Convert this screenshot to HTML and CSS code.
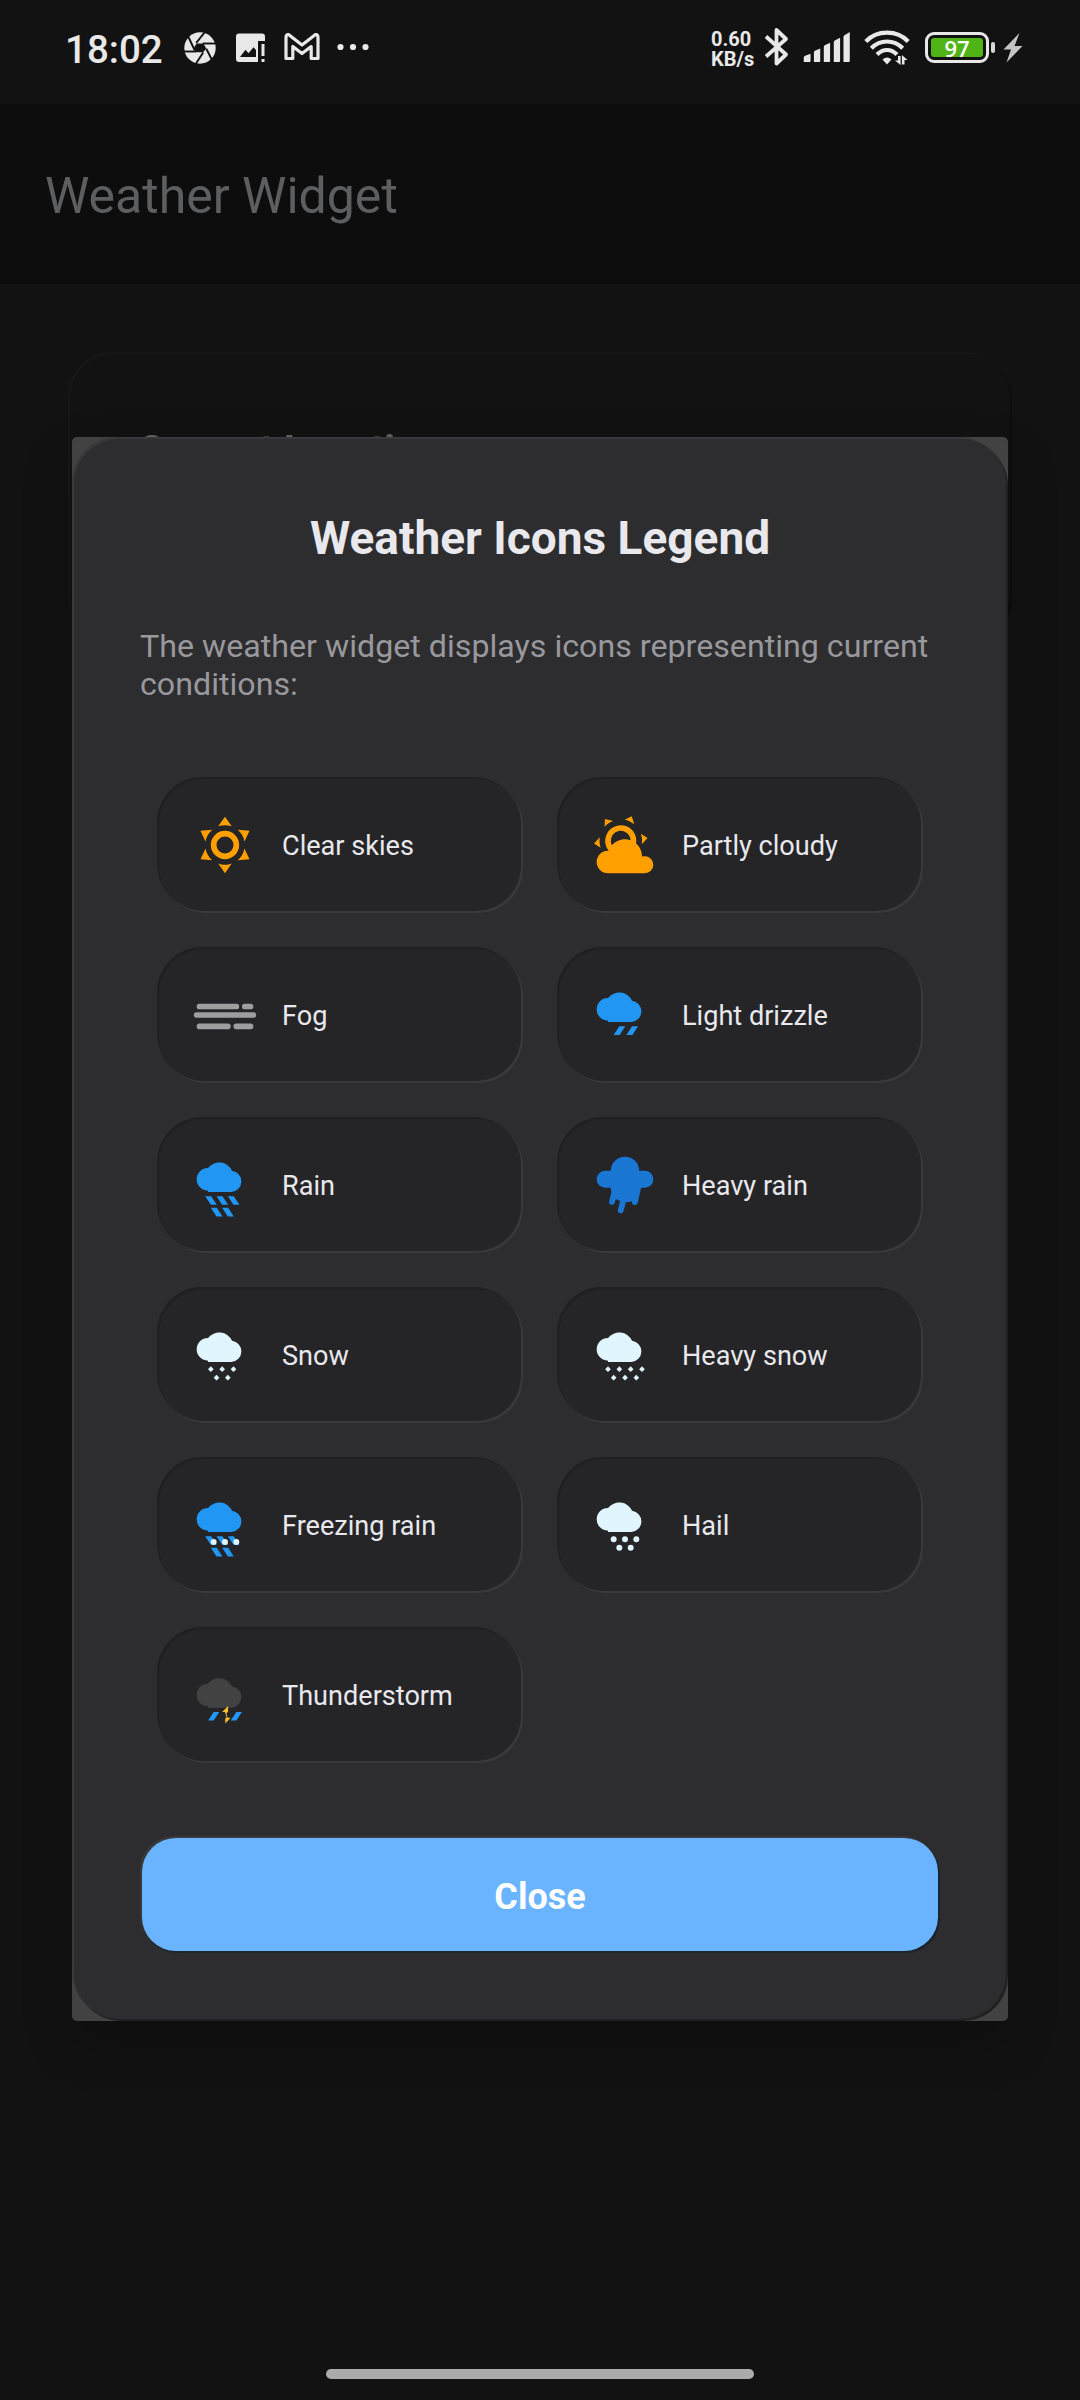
FILE: index.html
```html
<!DOCTYPE html>
<html lang="en">
<head>
<meta charset="utf-8">
<title>Weather Widget</title>
<link rel="stylesheet" href="styles.css">
</head>
<body>
<svg class="defs" aria-hidden="true">
  <defs>
    <path id="cloud" d="M6 14A4 4 0 0 1 6 6A5 5 0 0 1 14.5 7A3.77 3.77 0 0 1 14.25 14.5H6z"/>
    <path id="rain" d="M5 16h2.1l2 3H7zM9 16h2.1l2 3H11zM13 16h2.1l2 3H15zM7 20h2.1l2 3.1H9zM11 20h2.1l2 3.1H13z"/>
    <path id="flake" d="M0-1L1 0L0 1L-1 0z"/>
  </defs>
</svg>
<div class="screen">
  <header class="status">
    <div class="status-left">
      <span class="clock">18:02</span>
      <svg class="ic-shutter" viewBox="0 0 32 32"><circle cx="16" cy="16" r="15.7" fill="#e8e8e8"/><g stroke="#121212" stroke-width="1.9"><path d="M12.2 10.8L21 0"/><path d="M18.8 11.5L31.5 11.5" /><path d="M22.3 16.7L28 28"/><path d="M19.2 20.5L12 31.5"/><path d="M12 19.5L0 19.5"/><path d="M10.8 18.5L4 4"/></g><path d="M12.5 11.5h7l2.7 5-3 3.7h-7l-2.4-4z" fill="#121212"/></svg>
      <svg class="ic-photo" viewBox="0 0 30 30"><path fill="#e8e8e8" d="M3 .5H26a3 3 0 0 1 3 3V8h-7v21H3a3 3 0 0 1-3-3V3.500a3 3 0 0 1 3-3zM4 24H20V17L17.500 14.200l-5 6-3-3.500z" fill-rule="evenodd"/><path fill="#e8e8e8" d="M25.500 11h3v12h-3zM25.500 26h3v3h-3z"/></svg>
      <svg class="ic-mail" viewBox="0 0 36 28"><path d="M2 4.500Q2 1.500 4.500 1.500L18 12L31.500 1.500Q34 1.500 34 4.500V25.500H27.200V13.500L18 20.500L8.800 13.500V25.500H2z" fill="none" stroke="#e8e8e8" stroke-width="3.200" stroke-linejoin="round"/></svg>
      <svg class="ic-dots" viewBox="0 0 32 8" fill="#e8e8e8"><circle cx="3.500" cy="4" r="3.100"/><circle cx="16" cy="4" r="3.100"/><circle cx="28.500" cy="4" r="3.100"/></svg>
    </div>
    <div class="status-right">
      <div class="speed"><span>0.60</span><span>KB/s</span></div>
      <svg class="ic-bt" viewBox="0 0 26 40"><path d="M2 9.500L22 27.500L12.500 36.500V3L22 12L2 29.500" fill="none" stroke="#e8e8e8" stroke-width="3.800" stroke-linejoin="round"/></svg>
      <svg class="ic-signal" viewBox="0 0 48 32" fill="#e8e8e8"><path d="M0 31v-4.500Q0 25 1.500 24.500L7 22.500V30q0 1-1 1zM10.500 31V21q0-1.500 1.500-2l5-2V30q0 1-1 1zM20.700 31V15.500q0-1.500 1.500-2l5-2.500V30q0 1-1 1zM31 31V10.500q0-1.500 1.500-2L37.500 6V30q0 1-1 1zM41 31V5q0-1.500 1.500-2L47.500 0V30q0 1-1 1z"/></svg>
      <svg class="ic-wifi" viewBox="0 0 46 36"><g fill="none" stroke="#e8e8e8" stroke-width="4.200"><path d="M1.800 11.500Q10 2.600 23 2.600T44.200 11.500"/><path d="M7.300 18.200Q14 11.500 23 11.500T38.700 18.200"/><path d="M13 24.500Q17.500 20 23 20T33 24.500"/></g><path d="M18.500 29.500Q23 25.500 27.500 29.500L23 34.500z" fill="#e8e8e8"/><path d="M31 30.500h3V26h2.600v9zM43.500 30h-3v4.500h-2.600V25z" fill="#e8e8e8"/></svg>
      <div class="battery"><span class="charge">97</span></div>
      <i class="battery-tip"></i>
      <svg class="ic-bolt" viewBox="0 0 20 30"><path d="M16.500 0L.5 16.500H8L3.500 29.500L19.500 13H11.500z" fill="#c4c4c4"/></svg>
    </div>
  </header>

  <div class="appbar"><h1>Weather Widget</h1></div>
  <main class="page">
    <section class="panel"><h2>Current Location</h2></section>
  </main>

  <div class="dialog-window" role="dialog" aria-label="Weather Icons Legend">
    <div class="dialog">
      <h2 class="dialog-title">Weather Icons Legend</h2>
      <p class="dialog-text">The weather widget displays icons representing current conditions:</p>
      <div class="legend">
        <div class="item"><svg viewBox="0 0 24 24" fill="#ffa000"><path d="M12,7A5,5 0 0,1 17,12A5,5 0 0,1 12,17A5,5 0 0,1 7,12A5,5 0 0,1 12,7M12,9A3,3 0 0,0 9,12A3,3 0 0,0 12,15A3,3 0 0,0 15,12A3,3 0 0,0 12,9M12,2L14.390,5.420C13.650,5.150 12.840,5 12,5C11.160,5 10.350,5.150 9.610,5.420L12,2M3.340,7L7.500,6.650C6.900,7.160 6.360,7.780 5.940,8.500C5.500,9.240 5.250,10 5.110,10.790L3.340,7M3.360,17L5.120,13.230C5.260,14 5.530,14.780 5.950,15.500C6.370,16.240 6.910,16.860 7.500,17.370L3.360,17M20.650,7L18.880,10.790C18.740,10 18.470,9.230 18.050,8.500C17.630,7.780 17.100,7.150 16.500,6.640L20.650,7M20.640,17L16.500,17.360C17.090,16.850 17.620,16.220 18.040,15.500C18.460,14.770 18.730,14 18.870,13.210L20.640,17M12,22L9.590,18.560C10.330,18.830 11.140,19 12,19C12.820,19 13.630,18.830 14.370,18.560L12,22Z"/></svg><span>Clear skies</span></div>
        <div class="item"><svg viewBox="0 0 24 24" fill="#ffa000"><path d="M12.740,5.470C15.100,6.500 16.350,9.030 15.920,11.460C17.190,12.560 18,14.190 18,16V16.170C18.310,16.060 18.650,16 19,16A3,3 0 0,1 22,19A3,3 0 0,1 19,22H6A4,4 0 0,1 2,18A4,4 0 0,1 6,14H6.270C5,12.450 4.600,10.240 5.500,8.260C6.720,5.500 9.970,4.240 12.740,5.470M11.930,7.300C10.160,6.500 8.090,7.310 7.310,9.070C6.850,10.090 6.930,11.220 7.410,12.130C8.500,10.830 10.160,10 12,10C12.700,10 13.380,10.120 14,10.340C13.940,9.060 13.180,7.860 11.930,7.300M13.550,3.640C13,3.400 12.450,3.230 11.880,3.120L14.370,1.820L15.270,4.710C14.760,4.290 14.190,3.930 13.550,3.640M6.090,4.440C5.600,4.790 5.170,5.190 4.800,5.630L4.910,2.820L7.870,3.500C7.250,3.710 6.650,4.030 6.090,4.440M18,9.710C17.910,9.120 17.780,8.550 17.590,8L19.970,9.500L17.920,11.730C18.030,11.080 18.050,10.400 18,9.710M3.040,11.300C3.110,11.900 3.240,12.470 3.430,13L1.060,11.500L3.100,9.280C3,9.930 2.970,10.610 3.040,11.300Z"/></svg><span>Partly cloudy</span></div>
        <div class="item"><svg viewBox="0 0 24 24" fill="#9e9e9e"><rect x="2" y="8" width="15" height="2" rx=".9"/><rect x="18" y="8" width="4" height="2" rx=".9"/><rect x="1" y="11" width="22" height="2" rx=".9"/><rect x="2" y="15" width="12" height="2" rx=".9"/><rect x="15" y="15" width="7" height="2" rx=".9"/></svg><span>Fog</span></div>
        <div class="item"><svg viewBox="0 0 24 24" fill="#2196f3"><use href="#cloud"/><path d="M10 16h2.100l-2 3.100H8zM14.500 16h2.100l-2 3.100h-2.100z"/></svg><span>Light drizzle</span></div>
        <div class="item"><svg viewBox="0 0 24 24" fill="#2196f3"><use href="#cloud"/><use href="#rain"/></svg><span>Rain</span></div>
        <div class="item"><svg viewBox="0 0 24 24" fill="#1976d2"><path d="M5 7h2a5 5 0 0 1 10 0h2a3 3 0 0 1 0 6h-1.300l-1.200 5.200a1 1 0 0 1-2-.3l0-.2q-1 .4-2.200.4l-.8 3.100a1 1 0 0 1-2-.5l.8-3.100q-.9-.2-1.500-.7l-.4 1.300a1 1 0 0 1-2-.5l.8-3.300Q7 14 7 13H5a3 3 0 0 1 0-6z"/></svg><span>Heavy rain</span></div>
        <div class="item"><svg viewBox="0 0 24 24" fill="#e1f5fe"><use href="#cloud"/><use href="#flake" x="7" y="17"/><use href="#flake" x="11" y="17"/><use href="#flake" x="15" y="17"/><use href="#flake" x="9" y="20"/><use href="#flake" x="13" y="20"/></svg><span>Snow</span></div>
        <div class="item"><svg viewBox="0 0 24 24" fill="#e1f5fe"><use href="#cloud"/><use href="#flake" x="6" y="17"/><use href="#flake" x="10" y="17"/><use href="#flake" x="14" y="17"/><use href="#flake" x="18" y="17"/><use href="#flake" x="8" y="20"/><use href="#flake" x="12" y="20"/><use href="#flake" x="16" y="20"/></svg><span>Heavy snow</span></div>
        <div class="item"><svg viewBox="0 0 24 24" fill="#2196f3"><use href="#cloud"/><use href="#rain"/><g fill="#e1f5fe"><circle cx="8" cy="18" r="1.050"/><circle cx="12" cy="18" r="1.050"/><circle cx="16" cy="18" r="1.050"/></g></svg><span>Freezing rain</span></div>
        <div class="item"><svg viewBox="0 0 24 24" fill="#e1f5fe"><use href="#cloud"/><circle cx="8" cy="17" r="1.050"/><circle cx="12" cy="17" r="1.050"/><circle cx="16" cy="17" r="1.050"/><circle cx="10" cy="20" r="1.050"/><circle cx="14" cy="20" r="1.050"/></svg><span>Hail</span></div>
        <div class="item"><svg viewBox="0 0 24 24"><use href="#cloud" y="2" fill="#424242"/><path fill="#2196f3" d="M8 18h2l-2 3H6zM16 18h2l-2 3h-2z"/><path fill="#fbc02d" d="M13.100 15.900L11 18h1l.6 2-.5.100V22.100L14 20h-1.100l-.4-1.500.6-.7z"/></svg><span>Thunderstorm</span></div>
      </div>
      <button class="close" type="button">Close</button>
    </div>
  </div>
  <i class="home-bar"></i>
</div>
</body>
</html>
```
FILE: styles.css
```css
* { box-sizing: border-box; }
body { margin: 0; background: #121212; font-family: Roboto, sans-serif; }
h1, h2, p { margin: 0; }
svg { display: block; flex: none; }
.defs { position: absolute; width: 0; height: 0; }

.screen { position: relative; width: 1080px; height: 2400px; overflow: hidden; background: #121212; }

/* status bar */
.status { display: flex; justify-content: space-between; height: 104px; padding: 0 57px 0 65px; color: #e8e8e8; }
.status-left, .status-right { display: flex; align-items: flex-start; }
.clock { width: 119px; margin-top: 25px; font-size: 38.5px; font-weight: 500; line-height: 50px; white-space: nowrap; }
.ic-shutter { width: 32px; height: 32px; margin-top: 32px; }
.ic-photo { width: 30px; height: 30px; margin: 33px 0 0 20px; }
.ic-mail { width: 36px; height: 28px; margin: 33px 0 0 18px; }
.ic-dots { width: 32px; height: 8px; margin: 43px 0 0 17px; }
.speed { display: flex; flex-direction: column; width: 53px; margin-top: 29px; font-size: 20px; font-weight: 700; line-height: 20px; }
.ic-bt { width: 26px; height: 40px; margin-top: 27px; }
.ic-signal { width: 48px; height: 31px; margin: 32px 0 0 13px; }
.ic-wifi { width: 46px; height: 36px; margin: 30px 0 0 13px; }
.battery { display: flex; width: 64px; height: 31px; margin: 32px 0 0 15px; padding: 3px; border: 3px solid #e8e8e8; border-radius: 9px; }
.charge { flex: 1; border-radius: 3px; background: #51b416; font-family: "Open Sans", sans-serif; font-size: 22px; font-weight: 600; line-height: 20px; text-align: center; color: #fff; }
.battery-tip { width: 4px; height: 11px; margin: 42px 0 0 2px; border-radius: 2px; background: #d8d8d8; }
.ic-bolt { width: 20px; height: 30px; margin: 33px 0 0 8px; }

/* dimmed page */
.appbar { height: 180px; padding: 57px 45px 0; background: #0d0d0e; }
.appbar h1 { font-size: 50px; font-weight: 400; line-height: 70px; color: #5d5e60; }
.page { padding: 70px; }
.panel { height: 286px; padding: 72px 68px 0; border-radius: 44px; background: #121212; box-shadow: -2px -2px 0 #171717, 2px 2px 0 #0d0d0d; }
.panel h2 { font-size: 40.2px; font-weight: 700; line-height: 50px; color: #626264; }

/* dialog, laid over the page */
.dialog-window { position: absolute; left: 72px; top: 437px; width: 936px; height: 1584px; padding: 2px; overflow: hidden; border-radius: 5px; background: #424242; box-shadow: 0 22px 50px rgba(0, 0, 0, .22); }
.dialog { display: flex; flex-direction: column; height: 100%; padding: 66px; border-radius: 45px; background: #2d2d2f; box-shadow: -2px -2px 0 #39393b, 2px 2px 0 #202021; }
.dialog-title { height: 66px; font-size: 46px; font-weight: 700; line-height: 66px; text-align: center; color: #e8e8ed; }
.dialog-text { height: 76px; margin-top: 56px; font-size: 32.2px; line-height: 38px; color: #98989d; }
.legend { display: grid; grid-template-columns: 362px 362px; grid-auto-rows: 132px; gap: 38px; margin: 76px 19px 0; }
.item { display: flex; align-items: center; gap: 23px; padding-left: 32px; border-radius: 45px; background: #252527; box-shadow: -2px -2px 0 #202021, 2px 2px 0 #39393b; font-size: 27.1px; color: #e8e8ed; }
.item svg { width: 68px; height: 68px; }
.item span { padding-top: 2px; }
.close { height: 113px; margin: auto 2px 2px; padding: 4px 0 0; border: 0; border-radius: 34px; background: #6ab4ff; box-shadow: -2px -2px 0 #39393b, 2px 2px 0 #1a2530; font: 700 36px/60px Roboto, sans-serif; color: #fff; }

.home-bar { position: absolute; left: 326px; bottom: 21px; width: 428px; height: 10px; border-radius: 5px; background: #ababab; }
```
